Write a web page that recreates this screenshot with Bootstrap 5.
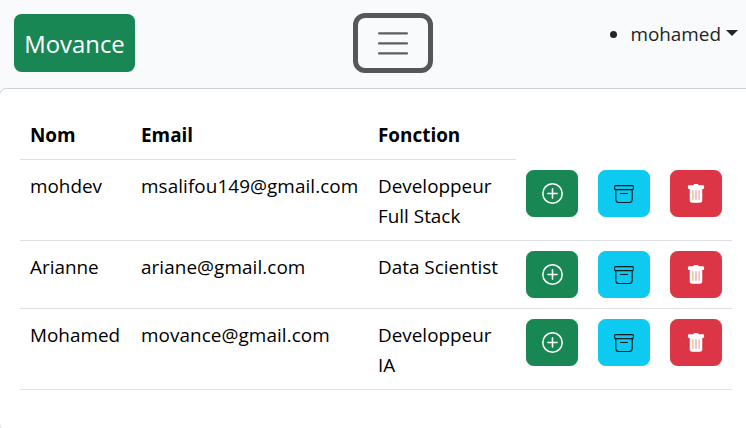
<!DOCTYPE html>
<html lang="fr">
<head>
<meta charset="utf-8">
<meta name="viewport" content="width=device-width, initial-scale=1">
<title>Movance</title>
<link href="https://cdn.jsdelivr.net/npm/bootstrap@5.3.0/dist/css/bootstrap.min.css" rel="stylesheet">
<style>
  html { font-size: 20px; }
  body { font-family: "Open Sans", "Noto Sans", sans-serif; font-size: 18.9px; line-height: 30px; overflow: hidden; }
  .topbar { height: 88px; padding: 13px 8px 0 14px; background: #f8fafc; }
  .brand-box { width: 121px; height: 58px; margin-top: 1px; border-radius: 7.5px; font-size: 23.9px; line-height: 60px; }
  .menu-btn { width: 80px; height: 60px; margin-left: 218px; padding: 0; border: 5px solid #565759; border-radius: 12px; }
  .user-list { margin: 6px 0 0; padding: 0; }
  .user-list li { color: #212529; }
  .user-list a { color: #212529; }
  .user-list a::after { margin-left: 5px; vertical-align: 5px; border-width: 6px 6px 0; }
  .page-bg { background: #f8fafc; }
  .users-card { height: 343px; margin: 0 -12px 0 -1px; border: 1px solid #cfd0d1; border-radius: 7.5px; }
  .users-card .card-body { padding: 19px 20px; }
  .users-table { width: 712px; table-layout: fixed; color: #000; }
  .users-table > :not(caption) > * > * { padding: 11px 10px 9px; height: 51px; border-bottom: 1px solid #dee2e6; }
  .users-table > tbody > tr > .act-cell { padding: 10px; }
  .users-table td:nth-child(2) { letter-spacing: .07px; white-space: nowrap; }
  .users-table > thead > tr > .no-line { border-bottom-color: transparent; }
  .w-name { width: 111px; } .w-mail { width: 237px; } .w-job { width: 148px; } .w-act { width: 72px; }
  .act { width: 52px; height: 47px; padding: 1px 0 0; border-radius: 7.5px; }
</style>
</head>
<body>
<svg class="d-none">
  <symbol id="plus" viewBox="0 0 16 16"><circle cx="8" cy="8" r="7.400" fill="none" stroke="currentColor" stroke-width="1.150"/><path d="M8 4.500v7M4.500 8h7" fill="none" stroke="currentColor" stroke-width="1.200" stroke-linecap="round"/></symbol>
  <symbol id="box" viewBox="0 0 20 20"><g fill="none" stroke="#051c22" stroke-width="1.100"><rect x=".6" y="1.600" width="18.800" height="4" rx="1"/><path d="M1.800 5.600V15.500a3 3 0 0 0 3 3h10.400a3 3 0 0 0 3-3V5.600M6.500 9.500h7" stroke-linecap="round"/></g></symbol>
  <symbol id="trash" viewBox="0 0 16 16"><path d="M2.500 1a1 1 0 0 0-1 1v1a1 1 0 0 0 1 1H3v9a2 2 0 0 0 2 2h6a2 2 0 0 0 2-2V4h.5a1 1 0 0 0 1-1V2a1 1 0 0 0-1-1H10a1 1 0 0 0-1-1H7a1 1 0 0 0-1 1H2.500z"/><path d="M5.500 5v7.500" stroke="#efb16f"/><path d="M8 5v7.500" stroke="#d7a0aa"/><path d="M10.500 5v7.500" stroke="#eea3b6"/></symbol>
</svg>

<nav class="topbar d-flex align-items-start">
  <a class="brand-box bg-success text-white text-center text-decoration-none" href="#">Movance</a>
  <button class="menu-btn btn d-flex align-items-center justify-content-center" type="button" aria-label="Menu">
    <svg width="38" height="38" viewBox="0 0 30 30" fill="none" stroke="#5e5f62" stroke-width="1.8" stroke-linecap="round"><path d="M4 7.400h22M4 15.300h22M4 23.200h22"/></svg>
  </button>
  <ul class="user-list ms-auto">
    <li><a class="dropdown-toggle text-decoration-none" href="#">mohamed</a></li>
  </ul>
</nav>

<main class="page-bg">
  <div class="card users-card">
    <div class="card-body">
      <table class="table users-table mb-0">
        <colgroup><col class="w-name"><col class="w-mail"><col class="w-job"><col class="w-act"><col class="w-act"><col class="w-act"></colgroup>
        <thead>
          <tr><th>Nom</th><th>Email</th><th>Fonction</th><td class="no-line" colspan="3"></td></tr>
        </thead>
        <tbody>
          <tr>
            <td>mohdev</td><td>msalifou149@gmail.com</td><td>Developpeur Full Stack</td>
            <td class="act-cell"><button class="act btn btn-success d-flex align-items-center justify-content-center"><svg width="21" height="21" fill="currentColor"><use href="#plus"/></svg></button></td>
            <td class="act-cell"><button class="act btn btn-info d-flex align-items-center justify-content-center"><svg width="20" height="20" fill="currentColor"><use href="#box"/></svg></button></td>
            <td class="act-cell"><button class="act btn btn-danger d-flex align-items-center justify-content-center"><svg width="20" height="20" fill="currentColor"><use href="#trash"/></svg></button></td>
          </tr>
          <tr>
            <td>Arianne</td><td>ariane@gmail.com</td><td>Data Scientist</td>
            <td class="act-cell"><button class="act btn btn-success d-flex align-items-center justify-content-center"><svg width="21" height="21" fill="currentColor"><use href="#plus"/></svg></button></td>
            <td class="act-cell"><button class="act btn btn-info d-flex align-items-center justify-content-center"><svg width="20" height="20" fill="currentColor"><use href="#box"/></svg></button></td>
            <td class="act-cell"><button class="act btn btn-danger d-flex align-items-center justify-content-center"><svg width="20" height="20" fill="currentColor"><use href="#trash"/></svg></button></td>
          </tr>
          <tr>
            <td>Mohamed</td><td>movance@gmail.com</td><td>Developpeur IA</td>
            <td class="act-cell"><button class="act btn btn-success d-flex align-items-center justify-content-center"><svg width="21" height="21" fill="currentColor"><use href="#plus"/></svg></button></td>
            <td class="act-cell"><button class="act btn btn-info d-flex align-items-center justify-content-center"><svg width="20" height="20" fill="currentColor"><use href="#box"/></svg></button></td>
            <td class="act-cell"><button class="act btn btn-danger d-flex align-items-center justify-content-center"><svg width="20" height="20" fill="currentColor"><use href="#trash"/></svg></button></td>
          </tr>
        </tbody>
      </table>
    </div>
  </div>
</main>
<script src="https://cdn.jsdelivr.net/npm/bootstrap@5.3.0/dist/js/bootstrap.bundle.min.js"></script>
</body>
</html>
